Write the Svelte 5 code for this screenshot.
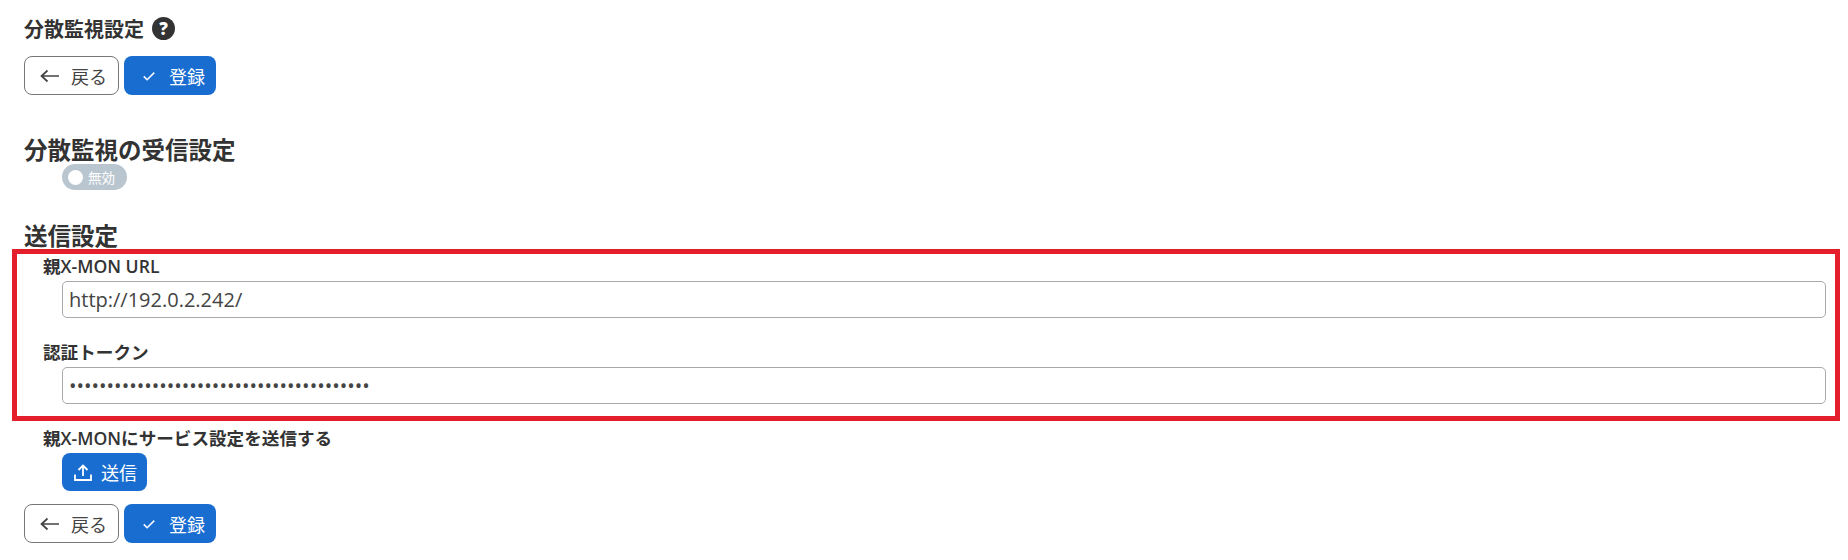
<script>
  const token = 'x'.repeat(40);
</script>

{#snippet actions()}
  <div class="actions">
    <button class="btn btn-back">
      <svg class="arrow" viewBox="0 0 24 24"><path d="M21 12H4M9.5 6.5 3.5 12l6 5.5" /></svg>
      <span>戻る</span>
    </button>
    <button class="btn btn-primary btn-save">
      <svg class="check" viewBox="0 0 24 24"><path d="M5 12.5l4.5 4.5L19 7.5" /></svg>
      <span>登録</span>
    </button>
  </div>
{/snippet}

<div class="page">
  <h1 class="title">
    分散監視設定
    <span class="help">?</span>
  </h1>
  {@render actions()}

  <h2 class="section recv">分散監視の受信設定</h2>
  <div class="toggle">
    <span class="knob"></span>
    <span>無効</span>
  </div>

  <h2 class="section send">送信設定</h2>
  <div class="field">
    <div class="field-label">親X-MON URL</div>
    <input class="input" type="text" value="http://192.0.2.242/" />
  </div>
  <div class="field second">
    <div class="field-label">認証トークン</div>
    <input class="input" type="password" value={token} />
  </div>
  <div class="field second">
    <div class="field-label">親X-MONにサービス設定を送信する</div>
    <button class="btn btn-primary btn-send">
      <svg class="upload" viewBox="0 0 24 24"><path d="M4 14.5V20h16v-5.5M12 16V5.5M7.5 10 12 5.5l4.5 4.5" /></svg>
      <span>送信</span>
    </button>
  </div>
  <div class="bottom">
    {@render actions()}
  </div>

  <div class="highlight"></div>
</div>

<style>
  :global(body) {
    margin: 0;
    background: #fff;
  }
  .page {
    position: relative;
    height: 560px;
    box-sizing: border-box;
    padding: 16px 22px 0 24px;
    overflow: hidden;
    color: #333;
    font-family: "Open Sans", "Noto Sans CJK JP", sans-serif;
  }
  .title {
    display: flex;
    align-items: center;
    gap: 8px;
    margin: 0;
    height: 24px;
    font-size: 20px;
    font-weight: 700;
  }
  .help {
    width: 23px;
    height: 23px;
    border-radius: 50%;
    background: #333;
    color: #fff;
    font-size: 17px;
    font-weight: 800;
    display: flex;
    align-items: center;
    justify-content: center;
  }
  .actions {
    display: flex;
    gap: 5px;
    margin-top: 16px;
  }
  .bottom .actions {
    margin-top: 13px;
  }
  .btn {
    height: 39px;
    box-sizing: border-box;
    border-radius: 8px;
    display: flex;
    align-items: center;
    font-family: inherit;
    font-size: 18px;
    padding: 0;
  }
  .btn-back {
    width: 95px;
    background: #fff;
    border: 1px solid #777;
    color: #444;
    padding-left: 13px;
    gap: 9px;
  }
  .btn-primary {
    background: #1a6dd0;
    border: none;
    color: #fff;
  }
  .btn-save {
    width: 92px;
    padding-left: 16px;
    gap: 11px;
  }
  .arrow {
    width: 24px;
    height: 24px;
    fill: none;
    stroke: #444;
    stroke-width: 1.7;
  }
  .check {
    width: 18px;
    height: 18px;
    fill: none;
    stroke: #fff;
    stroke-width: 2;
  }
  .upload {
    width: 24px;
    height: 24px;
    fill: none;
    stroke: #fff;
    stroke-width: 1.8;
  }
  .section {
    margin: 0;
    font-size: 23.5px;
    font-weight: 700;
    line-height: 30px;
  }
  .recv {
    margin-top: 40px;
    margin-bottom: -1px;
  }
  .send {
    margin-top: 31px;
  }
  .toggle {
    margin-left: 38px;
    width: 65px;
    height: 26px;
    border-radius: 13px;
    background: #b9c6d0;
    color: #fff;
    font-size: 13.5px;
    display: flex;
    align-items: center;
    gap: 5px;
    padding-left: 6px;
    box-sizing: border-box;
  }
  .knob {
    width: 15px;
    height: 15px;
    border-radius: 50%;
    background: #fff;
  }
  .field {
    margin: 2px 0 0 19px;
  }
  .second {
    margin-top: 21px;
  }
  .field-label {
    font-size: 17.6px;
    font-weight: 600;
    line-height: 26px;
    color: #333;
  }
  .input {
    display: block;
    margin: 2px 0 0 19px;
    width: calc(100% - 19px);
    height: 37px;
    box-sizing: border-box;
    border: 1px solid #aaa;
    border-radius: 5px;
    padding: 0 6px;
    font-family: inherit;
    font-size: 20px;
    color: #444;
    background: #fff;
  }
  .btn-send {
    margin: 2px 0 0 19px;
    width: 85px;
    height: 38px;
    padding-left: 9px;
    gap: 6px;
  }
  .highlight {
    position: absolute;
    left: 12px;
    top: 249px;
    width: 1828px;
    height: 172px;
    box-sizing: border-box;
    border: 5px solid #e41e2b;
    pointer-events: none;
  }
</style>
